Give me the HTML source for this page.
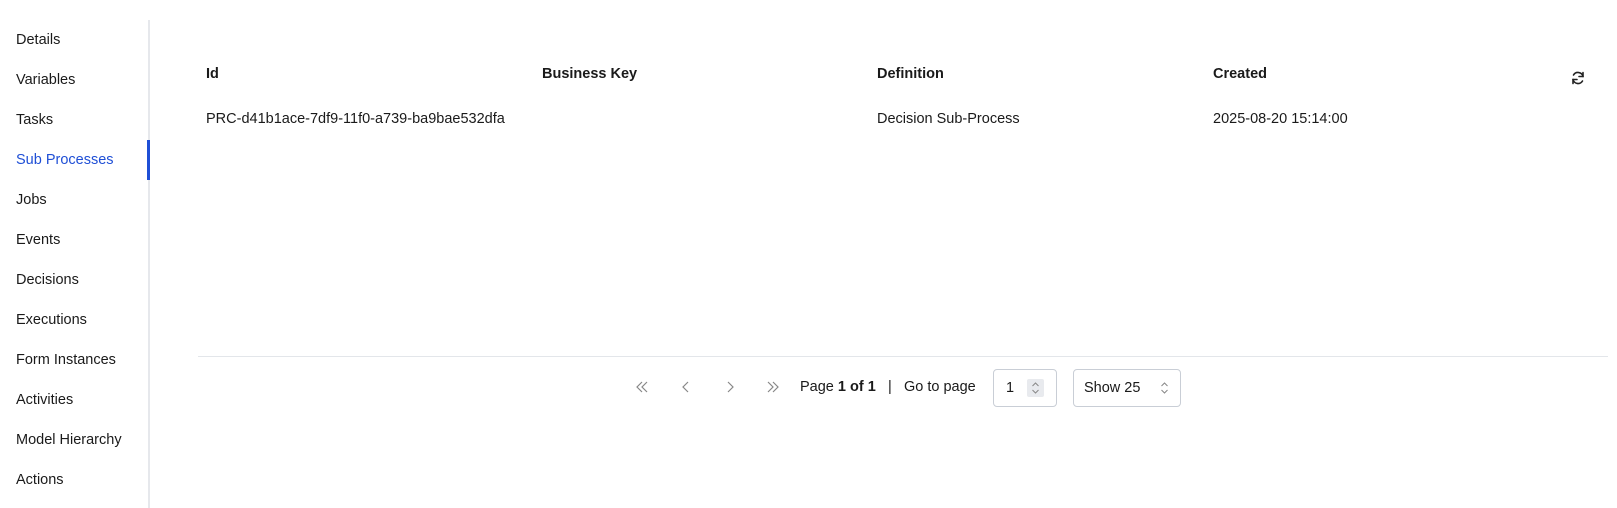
<!DOCTYPE html>
<html><head><meta charset="utf-8"><style>
*{margin:0;padding:0;box-sizing:border-box}
body{width:1617px;height:508px;background:#fff;font-family:"Liberation Sans",sans-serif;color:#1a1a1a;position:relative;overflow:hidden;font-size:14.5px}
.side{position:absolute;left:0;top:20px;width:150px;height:488px;border-right:2px solid #e6e8ec}
.side div{position:absolute;left:16px;line-height:20px}
.act{color:#1f4fd6}
.bar{position:absolute;left:147px;top:140px;width:3px;height:40px;background:#1f4fd6}
.t{position:absolute;line-height:20px;white-space:nowrap}
.h{font-weight:bold}
.line{position:absolute;left:198px;top:356px;width:1410px;height:1px;background:#e3e6ea}
.box{position:absolute;border:1px solid #c9ced6;border-radius:4px;height:38px;top:369px}
.ic{position:absolute;top:379px}
</style></head><body>
<div class="side">
<div style="top:10px">Details</div>
<div style="top:50px">Variables</div>
<div style="top:90px">Tasks</div>
<div style="top:130px" class="act">Sub Processes</div>
<div style="top:170px">Jobs</div>
<div style="top:210px">Events</div>
<div style="top:250px">Decisions</div>
<div style="top:290px">Executions</div>
<div style="top:330px">Form Instances</div>
<div style="top:370px">Activities</div>
<div style="top:410px">Model Hierarchy</div>
<div style="top:450px">Actions</div>
</div>
<div class="bar"></div>
<div class="t h" style="left:206px;top:64px">Id</div>
<div class="t h" style="left:542px;top:64px">Business Key</div>
<div class="t h" style="left:877px;top:64px">Definition</div>
<div class="t h" style="left:1213px;top:64px">Created</div>
<svg style="position:absolute;left:1570px;top:70px" width="16" height="16" viewBox="0 0 16 16" fill="none" stroke="#222" stroke-width="1.6" stroke-linecap="round"><path d="M13 6.5A5.2 5.2 0 0 0 3.5 5"/><path d="M13 2.5v4h-4"/><path d="M3 9.5A5.2 5.2 0 0 0 12.5 11"/><path d="M3 13.5v-4h4"/></svg>
<div class="t" style="left:206px;top:109px">PRC-d41b1ace-7df9-11f0-a739-ba9bae532dfa</div>
<div class="t" style="left:877px;top:109px">Decision Sub-Process</div>
<div class="t" style="left:1213px;top:109px">2025-08-20 15:14:00</div>
<div class="line"></div>
<svg class="ic" style="left:634px" width="16" height="16" viewBox="0 0 16 16" fill="none" stroke="#888" stroke-width="1.2"><path d="M8 3L3 8l5 5M13 3L8 8l5 5"/></svg>
<svg class="ic" style="left:678px" width="16" height="16" viewBox="0 0 16 16" fill="none" stroke="#888" stroke-width="1.2"><path d="M10 3L5 8l5 5"/></svg>
<svg class="ic" style="left:722px" width="16" height="16" viewBox="0 0 16 16" fill="none" stroke="#888" stroke-width="1.2"><path d="M6 3l5 5-5 5"/></svg>
<svg class="ic" style="left:765px" width="16" height="16" viewBox="0 0 16 16" fill="none" stroke="#888" stroke-width="1.2"><path d="M3 3l5 5-5 5M8 3l5 5-5 5"/></svg>
<div class="t" style="left:800px;top:377px">Page <b>1 of 1</b></div>
<div class="t" style="left:888px;top:377px">|</div>
<div class="t" style="left:904px;top:377px">Go to page</div>
<div class="box" style="left:993px;width:64px"><span class="t" style="left:12px;top:8px">1</span><span style="position:absolute;left:33px;top:9px;width:17px;height:18px;background:#e8eaee;border-radius:2px"><svg width="17" height="18" viewBox="0 0 17 18" fill="none" stroke="#888" stroke-width="1"><path d="M5.5 7l3-3 3 3M5.5 11l3 3 3-3"/></svg></span></div>
<div class="box" style="left:1073px;width:108px"><span class="t" style="left:10px;top:8px">Show 25</span><svg style="position:absolute;left:82px;top:9px" width="17" height="18" viewBox="0 0 17 18" fill="none" stroke="#888" stroke-width="1"><path d="M5.5 7l3-3 3 3M5.5 11l3 3 3-3"/></svg></div>
</body></html>
